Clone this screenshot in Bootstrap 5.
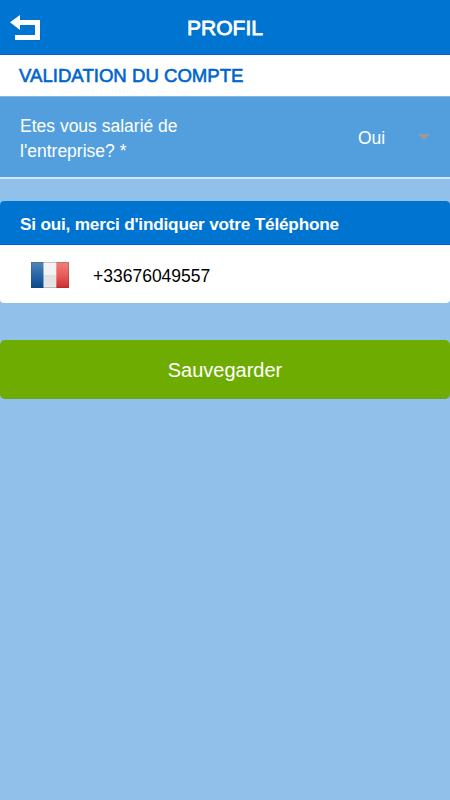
<!DOCTYPE html>
<html lang="fr">
<head>
<meta charset="utf-8">
<meta name="viewport" content="width=device-width, initial-scale=1">
<title>Profil</title>
<link href="https://cdn.jsdelivr.net/npm/bootstrap@5.3.0/dist/css/bootstrap.min.css" rel="stylesheet">
<style>
body{background:#91c0ea;font-family:"Liberation Sans",Arial,sans-serif;font-size:17.5px;line-height:25px;min-height:800px}
.topbar{height:55px;background:#0074d1;border-bottom:1px solid #0063cd}
.topbar h1{font-size:21px;line-height:25px;padding-top:1px;-webkit-text-stroke:.8px #fff}
.back-link{left:10px;top:14px}
.section-title{height:41px;padding-left:19px;font-size:18.6px;line-height:41px;color:#0066cc;-webkit-text-stroke:.6px #0066cc}
.question{height:83px;background:#539fde;border-top:1px solid #7db8e8;border-bottom:2px solid #d3e6f7;padding:0 20px}
.question label{width:180px;padding-top:4px}
.choice{width:72px;color:#fff}
.choice span{padding-top:2px}
.phone-card{margin-top:22px;height:102px;border-radius:4px}
.phone-head{height:44px;background:#0074d1;border-bottom:1px solid #0063cd;padding:3px 0 0 20px;font-size:17.2px;letter-spacing:-.2px}
.phone-body{padding-left:31px;gap:24px}
.phone-body svg{margin-top:2px}
.phone-number{padding-top:4px}
.save{margin-top:37px;height:59px;background:#6fac02;border:0;border-bottom:1px solid #65a22e;border-radius:5px;font-size:20px;color:#fff;padding-top:7px}
.save:hover{background:#659e02;color:#fff}
</style>
</head>
<body>
<header class="topbar position-relative d-flex align-items-center justify-content-center text-white">
  <a href="#" class="back-link position-absolute d-flex" aria-label="Retour">
    <svg width="32" height="28" viewBox="0 0 32 28"><path fill="#0060c0" d="M30.5 7v19.5H6L30 26z"/><path fill="#fff" d="M0 8.200 10 1v5h20v20H5v-5h20V11H10v5z"/></svg>
  </a>
  <h1 class="m-0 fw-normal">PROFIL</h1>
</header>
<main>
  <h2 class="section-title bg-white m-0 fw-normal">VALIDATION DU COMPTE</h2>
  <div class="question d-flex align-items-center justify-content-between text-white">
    <label>Etes vous salarié de l'entreprise? *</label>
    <div class="choice d-flex align-items-center justify-content-between">
      <span>Oui</span>
      <svg width="12" height="7" viewBox="0 0 12 7"><path fill="#999" d="M0 0h12L6 6.200z"/></svg>
    </div>
  </div>
  <section class="phone-card bg-white overflow-hidden d-flex flex-column">
    <div class="phone-head d-flex align-items-center text-white fw-bold"><span>Si oui, merci d'indiquer votre Téléphone</span></div>
    <div class="phone-body d-flex align-items-center flex-grow-1 text-black">
      <svg width="38" height="26" viewBox="0 0 38 26" role="img" aria-label="France">
        <defs>
          <linearGradient id="fb" x2="0" y2="1"><stop stop-color="#5286b9"/><stop offset=".5" stop-color="#2867a8"/><stop offset="1" stop-color="#07478c"/></linearGradient>
          <linearGradient id="fw" x2="0" y2="1"><stop stop-color="#f3f3f3"/><stop offset=".49" stop-color="#f2f2f2"/><stop offset=".5" stop-color="#e1e1e1"/><stop offset="1" stop-color="#e6e6e6"/></linearGradient>
          <linearGradient id="fr" x2="0" y2="1"><stop stop-color="#f27d7a"/><stop offset=".5" stop-color="#e85e5b"/><stop offset="1" stop-color="#cf2c2b"/></linearGradient>
        </defs>
        <path fill="url(#fb)" d="M0 0h12.700v26H0z"/><path fill="url(#fw)" d="M12.700 0h12.600v26H12.700z"/><path fill="url(#fr)" d="M25.300 0H38v26H25.300z"/>
        <path fill="none" stroke="#444" stroke-opacity=".25" d="M.5.5h37v25H.5z"/>
      </svg>
      <span class="phone-number">+33676049557</span>
    </div>
  </section>
  <button type="button" class="btn save w-100 d-flex align-items-center justify-content-center">Sauvegarder</button>
</main>
<script src="https://cdn.jsdelivr.net/npm/bootstrap@5.3.0/dist/js/bootstrap.bundle.min.js"></script>
</body>
</html>
